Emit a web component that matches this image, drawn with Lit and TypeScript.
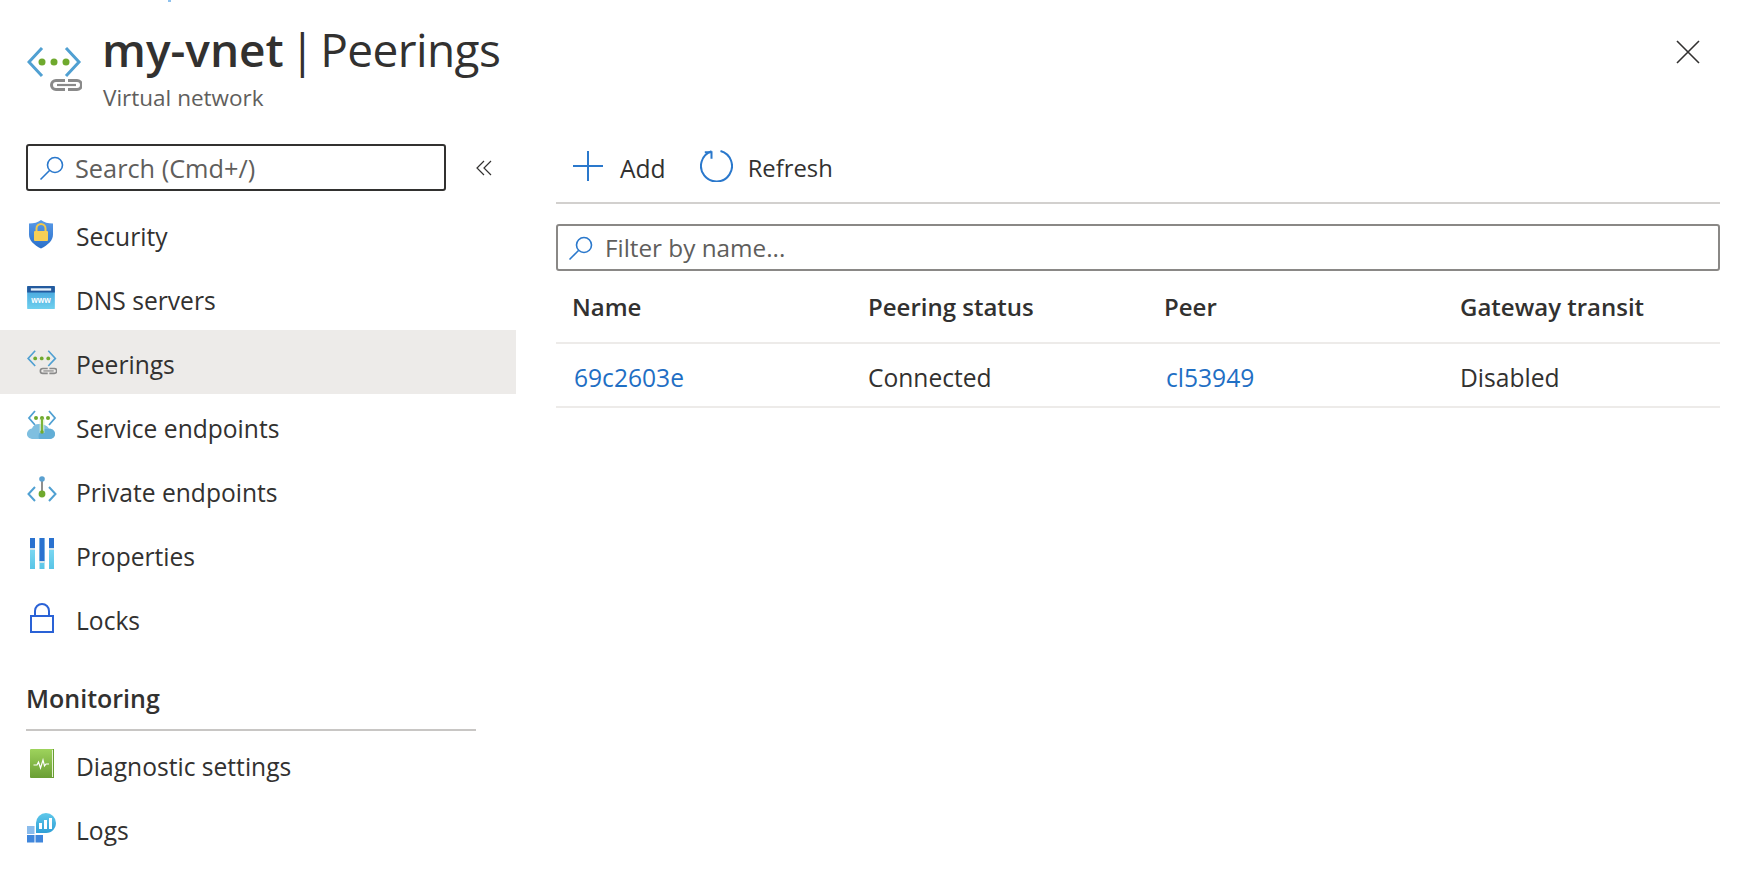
import { html, css, LitElement, svg, TemplateResult } from 'lit'
import { customElement } from 'lit/decorators.js'

const vnetPaths = svg`
  <path d="M15 1 2 15l13 14" fill="none" stroke="#50a0d2" stroke-width="3"/>
  <path d="M39 1l13 14-13 14" fill="none" stroke="#50a0d2" stroke-width="3"/>
  <circle cx="15" cy="15" r="3.500" fill="#6fa92e"/>
  <circle cx="27" cy="15" r="3.500" fill="#6fa92e"/>
  <circle cx="39" cy="15" r="3.500" fill="#6fa92e"/>
  <path d="M38 33.500H29a4.500 4.500 0 0 0 0 9h9" fill="none" stroke="#8a8a8a" stroke-width="3"/>
  <path d="M41 33.500h9a4.500 4.500 0 0 1 0 9h-9" fill="none" stroke="#8a8a8a" stroke-width="3"/>
  <path d="M30 38h19" stroke="#8a8a8a" stroke-width="2.200"/>
`

const icons: Record<string, TemplateResult> = {
  security: html`<svg width="30" height="30" viewBox="1 0 30 30">
    <defs><linearGradient id="sh" x1="0" y1="0" x2="0" y2="1"><stop offset="0" stop-color="#5a9be8"/><stop offset="1" stop-color="#2a6fc9"/></linearGradient></defs>
    <path d="M15 1c3 2.500 7 3.500 12 3.500v11c0 6-5 10.500-12 14C8 26 3 21.500 3 15.500v-11C8 4.500 12 3.500 15 1z" fill="url(#sh)"/>
    <path d="M10.500 12V9.500a4.500 4.500 0 0 1 9 0V12" fill="none" stroke="#f2c84b" stroke-width="2"/>
    <rect x="8" y="12" width="14" height="10" rx="1" fill="#f7cf55"/>
  </svg>`,
  dns: html`<svg width="28" height="24" viewBox="0 0 30 26">
    <defs><linearGradient id="dn" x1="0" y1="0" x2="0" y2="1"><stop offset="0" stop-color="#3f9fdc"/><stop offset="1" stop-color="#6fd0ee"/></linearGradient></defs>
    <rect width="30" height="25" rx="1" fill="url(#dn)"/>
    <path d="M1 0h28a1 1 0 0 1 1 1v6H0V1a1 1 0 0 1 1-1z" fill="#235a9e"/>
    <rect x="4" y="2.500" width="22" height="2.500" fill="#e8f2fa"/>
    <text x="15" y="18" text-anchor="middle" class="www">www</text>
  </svg>`,
  peerings: html`<svg width="30" height="25" viewBox="0 0 55 45">${vnetPaths}</svg>`,
  service: html`<svg width="30" height="32" viewBox="0 0 30 32">
    <path d="M22 18.500c3.500 0 6 2.200 6 5.500a5 5 0 0 1-5 5H5a5 5 0 0 1-4-8c.8-1.500 2.500-2.500 4-2.500 1-3 3.500-4.500 7-4.500 5 0 8 1.500 10 4.500z" fill="#7fbfe0"/>
    <path d="M22 19c3 0 6 2 6 5a5 5 0 0 1-5 5H12c-1.500-4 1-9 5-10z" fill="#62aed6"/>
    <path d="M8 1 2 8l6 7M22 1l6 7-6 7" fill="none" stroke="#50a0d2" stroke-width="1.800"/>
    <rect x="12.500" y="8" width="5" height="15" fill="#dcebd0" opacity=".7"/>
    <circle cx="9" cy="8" r="2" fill="#6fa92e"/><circle cx="15" cy="8" r="2" fill="#6fa92e"/><circle cx="21" cy="8" r="2" fill="#6fa92e"/>
    <rect x="14" y="8" width="2" height="14" fill="#7cb43a"/>
    <circle cx="15" cy="22" r="1.800" fill="#6fa92e"/>
  </svg>`,
  private: html`<svg width="30" height="30" viewBox="0 0 30 30">
    <path d="M8 12 1.500 19 8 26M22 12l6.500 7-6.500 7" fill="none" stroke="#50a0d2" stroke-width="2"/>
    <rect x="14" y="4" width="2" height="14" fill="#8f8f8f"/>
    <circle cx="15" cy="4" r="2.800" fill="#5aa0d0"/>
    <circle cx="15" cy="19" r="3.400" fill="#6fa92e"/>
  </svg>`,
  properties: html`<svg class="nudge" width="24" height="32" viewBox="0 0 24 32">
    <defs><linearGradient id="pr" x1="0" y1="0" x2="0" y2="1"><stop offset="0" stop-color="#8fe2f8"/><stop offset="1" stop-color="#58c4e6"/></linearGradient></defs>
    <rect x="0" y="0" width="5" height="31" fill="url(#pr)"/><rect x="9.500" y="0" width="5" height="31" fill="url(#pr)"/><rect x="19" y="0" width="5" height="31" fill="url(#pr)"/>
    <rect x="0" y="0" width="5" height="10" fill="#2a72cf"/>
    <rect x="9.500" y="0" width="5" height="23" fill="#2a72cf"/>
    <rect x="19" y="0" width="5" height="10" fill="#2a72cf"/>
    <rect x="0" y="10" width="5" height="2" fill="#d3e4ea"/><rect x="9.500" y="23" width="5" height="2" fill="#d3e4ea"/><rect x="19" y="10" width="5" height="2" fill="#d3e4ea"/>
  </svg>`,
  locks: html`<svg class="nudge" width="24" height="30" viewBox="0 0 24 30">
    <rect x="1" y="13" width="22" height="16" fill="none" stroke="#2a62d6" stroke-width="2"/>
    <path d="M5 13V8a7 7 0 0 1 14 0v5" fill="none" stroke="#2a62d6" stroke-width="2"/>
  </svg>`,
  diagnostic: html`<svg class="nudge" width="25" height="30" viewBox="0 0 25 30">
    <defs><linearGradient id="dg" x1="0" y1="0" x2="0" y2="1"><stop offset="0" stop-color="#9ed35c"/><stop offset="1" stop-color="#6a9e34"/></linearGradient></defs>
    <rect x="0" y="0" width="24" height="29" rx="1" fill="url(#dg)"/>
    <path d="M22.500 1v27" stroke="#e8f3d8" stroke-width="1"/>
    <path d="M23.500 0v29" stroke="#6a9e34" stroke-width="1"/>
    <path d="M3.500 16H7l1.500-3 2 6 2.500-8 1.500 6 1.500-2H19" fill="none" stroke="#fff" stroke-width="1.200"/>
  </svg>`,
  logs: html`<svg width="30" height="30" viewBox="0 0 30 30">
    <defs><linearGradient id="lg" x1="0" y1="0" x2="0" y2="1"><stop offset="0" stop-color="#5fc8ea"/><stop offset="1" stop-color="#2f9fd6"/></linearGradient></defs>
    <path d="M19 0a10 10 0 0 1 10 10c0 5-4 10-10 10H9V10A10 10 0 0 1 19 0z" fill="url(#lg)"/>
    <rect x="12" y="10" width="3" height="6" fill="#fff"/><rect x="17" y="7" width="3" height="9" fill="#fff"/><rect x="22" y="5" width="3" height="11" fill="#fff"/>
    <rect x="0" y="13" width="7.500" height="8" fill="#8bbcec"/>
    <rect x="0" y="22" width="7.500" height="7.500" fill="#3f86dc"/>
    <rect x="8.500" y="22" width="7.500" height="7.500" fill="#3f86dc"/>
  </svg>`,
}

const searchIcon = html`<svg width="26" height="26" viewBox="0 0 26 26">
  <circle cx="16" cy="10" r="7.500" fill="none" stroke="#2a78cc" stroke-width="1.600"/>
  <path d="M10.500 15.500 1.500 24.500" stroke="#2a78cc" stroke-width="1.600"/>
</svg>`

@customElement('app-root')
export class AppRoot extends LitElement {
  static styles = css`
    :host {
      display: block;
      width: 1742px;
      height: 870px;
      overflow: hidden;
      background: #fff;
      color: #323130;
      font-family: "Open Sans", "Noto Sans", sans-serif;
      font-size: 24.600px;
    }
    svg { display: block; flex: none; }
    .nudge { margin-left: 3px; }
    .www { font: 700 9px "Liberation Sans", sans-serif; fill: #fff; }
    .crumb-tail { width: 3px; height: 2px; margin-left: 168px; background: #8fc2ee; }
    header {
      height: 142px;
      box-sizing: border-box;
      padding: 17px 42px 0 27px;
      display: flex;
    }
    .blade-icon { margin-top: 28px; }
    .titles { margin-left: 20px; flex: 1; }
    h1 {
      margin: 0;
      font-size: 46px;
      line-height: 60px;
      font-weight: 400;
      letter-spacing: -0.6px;
      word-spacing: -5.500px;
      white-space: nowrap;
    }
    h1 b { font-weight: 600; letter-spacing: 0; }
    .sub { font-size: 22.500px; line-height: 30px; margin-top: 4px; margin-left: 1px; color: #605e5c; }
    .close { margin-top: 21px; }
    .main { display: flex; align-items: flex-start; }
    .side { width: 516px; flex: none; }
    .search-row { display: flex; align-items: center; padding-left: 26px; height: 47px; margin-bottom: 11px; }
    .search {
      width: 420px;
      height: 47px;
      box-sizing: border-box;
      border: 2px solid #323130;
      border-radius: 3px;
      display: flex;
      align-items: center;
      gap: 10px;
      padding-left: 11px;
      color: #605e5c;
      font-size: 25.300px;
    }
    .collapse { margin-left: 30px; }
    .item { height: 64px; display: flex; align-items: center; }
    .item.on { background: #edebe9; }
    .ic { width: 49px; margin-left: 27px; display: flex; }
    .name { white-space: nowrap; padding-top: 5px; }
    .group {
      margin: 32px 40px 0 26px;
      height: 47px;
      border-bottom: 2px solid #c8c6c4;
      font-weight: 600;
      font-size: 25px;
      line-height: 33px;
    }
    .group + .item { margin-top: 1px; }
    .content { flex: 1; margin: 0 22px 0 40px; min-width: 0; }
    .toolbar {
      height: 43px;
      border-bottom: 2px solid #d2d0ce;
      display: flex;
      align-items: center;
      padding: 0 0 15px 17px;
    }
    .tool { display: flex; align-items: center; gap: 17px; margin-right: 34px; }
    .tool + .tool { gap: 15px; font-size: 23.800px; }
    .tool span { margin-top: 5px; }
    .filter {
      margin-top: 20px;
      height: 47px;
      box-sizing: border-box;
      border: 2px solid #8a8886;
      border-radius: 3px;
      display: flex;
      align-items: center;
      gap: 11px;
      padding-left: 10px;
      color: #605e5c;
      font-size: 24.300px;
    }
    .row {
      display: grid;
      grid-template-columns: repeat(4, 296px);
      height: 64px;
      align-items: center;
      padding: 4px 0 0 16px;
      border-bottom: 2px solid #edebe9;
      box-sizing: border-box;
    }
    .row.head { font-weight: 600; font-size: 24px; height: 73px; padding-top: 0; }
    a { color: #1f6fc4; text-decoration: none; margin-left: 2px; }
  `

  private item(key: string, name: string, on = false) {
    return html`<div class="item ${on ? 'on' : ''}">
      <span class="ic">${icons[key]}</span><span class="name">${name}</span>
    </div>`
  }

  render() {
    return html`
      <div class="crumb-tail"></div>
      <header>
        <svg class="blade-icon" width="55" height="45" viewBox="0 0 55 45">${vnetPaths}</svg>
        <div class="titles">
          <h1><b>my-vnet</b> | Peerings</h1>
          <div class="sub">Virtual network</div>
        </div>
        <svg class="close" width="24" height="24" viewBox="0 0 24 24">
          <path d="M1 1l22 22M23 1 1 23" stroke="#323130" stroke-width="1.600"/>
        </svg>
      </header>
      <div class="main">
        <nav class="side">
          <div class="search-row">
            <div class="search">${searchIcon}<span>Search (Cmd+/)</span></div>
            <svg class="collapse" width="16" height="16" viewBox="0 0 16 16">
              <path d="M8 1 1 8l7 7M15 1 8 8l7 7" fill="none" stroke="#323130" stroke-width="1.200"/>
            </svg>
          </div>
          ${this.item('security', 'Security')}
          ${this.item('dns', 'DNS servers')}
          ${this.item('peerings', 'Peerings', true)}
          ${this.item('service', 'Service endpoints')}
          ${this.item('private', 'Private endpoints')}
          ${this.item('properties', 'Properties')}
          ${this.item('locks', 'Locks')}
          <div class="group">Monitoring</div>
          ${this.item('diagnostic', 'Diagnostic settings')}
          ${this.item('logs', 'Logs')}
        </nav>
        <section class="content">
          <div class="toolbar">
            <div class="tool">
              <svg width="30" height="30" viewBox="0 0 30 30"><path d="M15 0v30M0 15h30" stroke="#2a78cc" stroke-width="2"/></svg>
              <span>Add</span>
            </div>
            <div class="tool">
              <svg width="33" height="33" viewBox="0 0 33 33">
                <path d="M20.500 2a15.500 15.500 0 1 1-9 .3" fill="none" stroke="#2a78cc" stroke-width="2"/>
                <path d="M4.800 3.300h6.700v6.400" fill="none" stroke="#2a78cc" stroke-width="2"/>
              </svg>
              <span>Refresh</span>
            </div>
          </div>
          <div class="filter">${searchIcon}<span>Filter by name...</span></div>
          <div class="row head"><span>Name</span><span>Peering status</span><span>Peer</span><span>Gateway transit</span></div>
          <div class="row"><a>69c2603e</a><span>Connected</span><a>cl53949</a><span>Disabled</span></div>
        </section>
      </div>
    `
  }
}
